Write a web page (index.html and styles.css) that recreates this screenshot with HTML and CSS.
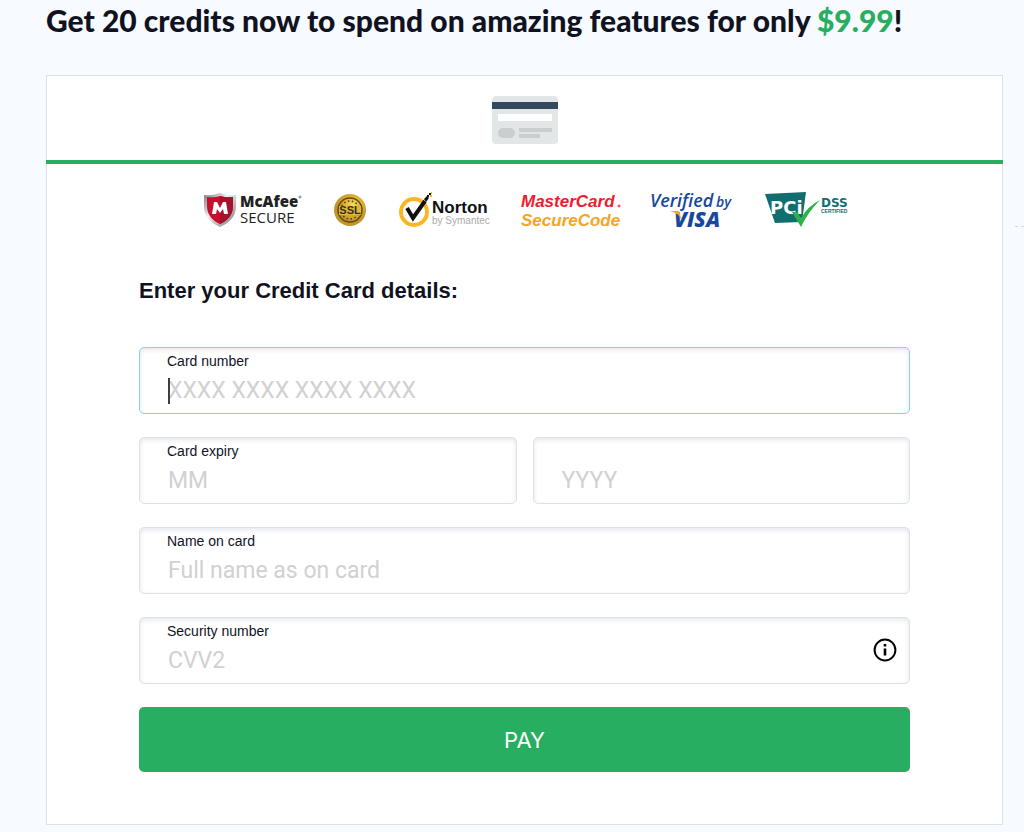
FILE: index.html
```html
<!DOCTYPE html>
<html lang="en">
<head>
<meta charset="utf-8">
<meta name="viewport" content="width=device-width, initial-scale=1">
<title>Get credits</title>
<link rel="stylesheet" href="styles.css">
</head>
<body>
<main class="page">
  <h1 class="offer">Get 20 credits now to spend on amazing features for only <span class="price">$9.99</span>!</h1>
  <div class="layout">
    <section class="panel">
      <div class="panel-tab">
        <svg class="card-icon" width="66" height="48" viewBox="0 0 66 48" role="img" aria-label="Credit card">
          <rect width="66" height="48" rx="4" fill="#e2e6e6"/>
          <rect y="6" width="66" height="7" fill="#324a5e"/>
          <rect x="6" y="18" width="54" height="7" fill="#fff"/>
          <rect x="6" y="32" width="17" height="10" rx="5" fill="#cbcecd"/>
          <rect x="27" y="32" width="33" height="4" fill="#cbcecd"/>
          <rect x="27" y="38" width="21" height="4" fill="#cbcecd"/>
        </svg>
      </div>
      <div class="badges">
        <svg width="98" height="36" viewBox="0 0 98 36" role="img" aria-label="McAfee Secure">
          <defs><linearGradient id="steel" x1="0" y1="0" x2="1" y2="1"><stop offset="0" stop-color="#777"/><stop offset=".4" stop-color="#eee"/><stop offset="1" stop-color="#777"/></linearGradient></defs>
          <path d="M1 3Q9 4 17 1Q25 4 33 3V14Q33 28 17 35Q1 28 1 14Z" fill="url(#steel)"/>
          <path d="M4 5Q11 6 17 4Q24 6 30 5V14Q30 26 17 32Q4 26 4 14Z" fill="#c8102e"/>
          <path d="M17 4Q24 6 30 5V14Q30 26 17 32Z" fill="#a5122c"/>
          <path d="M9 22L11 10H14L17 16L20 10H23L25 22H21L20 17L17 21L14 17L13 22Z" fill="#fff"/>
          <text class="mcafee" x="37" y="15">McAfee</text>
          <text class="mcafee-secure" x="37" y="31">SECURE</text>
          <circle cx="97" cy="5" r="1" fill="none" stroke="#777" stroke-width="1"/>
        </svg>
        <svg width="33" height="36" viewBox="0 0 33 36" role="img" aria-label="SSL">
          <defs><radialGradient id="gold" cx=".6" cy=".35"><stop offset="0" stop-color="#f8df62"/><stop offset=".6" stop-color="#dfab2c"/><stop offset="1" stop-color="#c39427"/></radialGradient></defs>
          <circle cx="17" cy="18" r="16" fill="url(#gold)"/>
          <circle cx="17" cy="18" r="12" fill="none" stroke="#5d4a1c" stroke-width="1.5"/>
          <circle cx="17" cy="18" r="9" fill="none" stroke="#4b3c1b" stroke-width="1.5" stroke-dasharray="1.5 2.5"/>
          <rect x="6" y="14" width="22" height="9" fill="#e2b53b"/>
          <text class="ssl" x="17" y="22">SSL</text>
        </svg>
        <svg width="91" height="38" viewBox="0 0 91 38" role="img" aria-label="Norton by Symantec">
          <circle cx="16" cy="21" r="13" fill="#fff" stroke="#fbb624" stroke-width="4"/>
          <path d="M9 17L15 27L27 10" fill="none" stroke="#111" stroke-width="4"/>
          <path d="M26 8l3-3 2 2-3 4zM29 4h2v2h-2zM31 2h2v2h-2z" fill="#111"/>
          <path d="M32 4h2v2h-2zM33 1h1v2h-1z" fill="#fbb624"/>
          <text class="norton" x="34" y="22">Norton</text>
          <text class="symantec" x="34" y="33">by Symantec</text>
        </svg>
        <svg width="98" height="38" viewBox="0 0 98 38" role="img" aria-label="MasterCard SecureCode">
          <text class="mastercard" x="0" y="16">MasterCard</text>
          <text class="securecode" x="0" y="35">SecureCode</text>
          <circle cx="98" cy="15" r="1" fill="none" stroke="#ee1c2e" stroke-width="1"/>
        </svg>
        <svg width="82" height="38" viewBox="0 0 82 38" role="img" aria-label="Verified by Visa">
          <text class="verified" x="-1" y="16">Verified</text>
          <text class="verified-by" x="65" y="16">by</text>
          <text class="visa" x="23" y="36">VISA</text>
          <path d="M19 20H28L31 30Q28 22 19 20Z" fill="#f7a823"/>
        </svg>
        <svg width="85" height="36" viewBox="0 0 85 36" role="img" aria-label="PCI DSS Certified">
          <path d="M0 2L41 0L37 30L10 31Z" fill="#116e70"/>
          <text class="pci" x="5" y="22">PCi</text>
          <path d="M27 20H32L36 26Q43 14 55 8Q43 20 36 35Z" fill="#2bb24c"/>
          <text class="dss" x="56" y="15">DSS</text>
          <text class="certified" x="56" y="21">CERTIFIED</text>
        </svg>
      </div>
      <form class="payment">
        <h2 class="form-title">Enter your Credit Card details:</h2>
        <div class="field field-active">
          <label for="number">Card number</label>
          <input id="number" type="text" inputmode="numeric" placeholder="XXXX XXXX XXXX XXXX">
          <span class="caret"></span>
        </div>
        <div class="field-row">
          <div class="field">
            <label for="month">Card expiry</label>
            <input id="month" type="text" inputmode="numeric" placeholder="MM">
          </div>
          <div class="field field-unlabelled">
            <input type="text" inputmode="numeric" placeholder="YYYY" aria-label="Card expiry year">
          </div>
        </div>
        <div class="field">
          <label for="name">Name on card</label>
          <input id="name" type="text" placeholder="Full name as on card">
        </div>
        <div class="field">
          <label for="cvv">Security number</label>
          <input id="cvv" type="text" inputmode="numeric" placeholder="CVV2">
          <button class="info" type="button" aria-label="About the security number">
            <svg width="24" height="24" viewBox="0 0 24 24" aria-hidden="true">
              <circle cx="12" cy="12" r="10.4" fill="none" stroke="#000" stroke-width="2"/>
              <path d="M12 10.5v7M12 6v2.5" stroke="#000" stroke-width="2.6"/>
            </svg>
          </button>
        </div>
        <button class="pay" type="submit">PAY</button>
      </form>
    </section>
    <div class="divider"></div>
  </div>
</main>
</body>
</html>
```
FILE: styles.css
```css
* { box-sizing: border-box; }

body {
  margin: 0;
  background: #f7faff;
  color: #10131f;
  font-family: "Liberation Sans", Arial, sans-serif;
}

.page { padding: 0 0 7px 46px; }

.offer {
  margin: 0;
  padding-bottom: 35px;
  font: 900 30px/40px "Lato", sans-serif;
}

.price { color: #27ae60; }

.layout {
  display: grid;
  grid-template-columns: 1fr 9px;
  column-gap: 12px;
}

.panel {
  background: #fff;
  border: 1px solid #dde1ea;
}

.panel-tab {
  display: flex;
  justify-content: center;
  margin: 0 -1px;
  padding: 20px 0 16px;
  border-bottom: 4px solid #27ae60;
}

.card-icon { display: block; }

.badges {
  display: flex;
  justify-content: center;
  align-items: center;
  gap: 32px;
  padding: 27px 0 0 4px;
}

.badges svg { overflow: visible; }

.mcafee { font: 800 15px "Open Sans", sans-serif; fill: #222; }
.mcafee-secure { font: 400 15px "Open Sans", sans-serif; fill: #222; }
.ssl { font: 700 11px "Liberation Sans", sans-serif; fill: #33301f; text-anchor: middle; }
.norton { font: 700 17px "Liberation Sans", sans-serif; fill: #111; }
.symantec { font: 400 10px "Liberation Sans", sans-serif; fill: #aaa; }
.mastercard { font: italic 700 17px "Liberation Sans", sans-serif; fill: #ee1c2e; }
.securecode { font: italic 700 17px "Liberation Sans", sans-serif; fill: #f5a623; }
.verified { font: italic 600 18px "Open Sans", sans-serif; fill: #17479e; }
.verified-by { font: italic 600 14px "Open Sans", sans-serif; fill: #17479e; }
.visa { font: italic 800 21px "Open Sans", sans-serif; fill: #17479e; }
.pci { font: 700 18px "DejaVu Sans", sans-serif; fill: #fff; }
.dss { font: 700 12px "DejaVu Sans", sans-serif; fill: #116e70; }
.certified { font: 700 5px "Liberation Sans", sans-serif; fill: #116e70; }

.payment {
  display: flex;
  flex-direction: column;
  gap: 23px;
  padding: 48px 92px 52px;
}

.form-title {
  margin: 0 0 19px;
  font-size: 22px;
  line-height: 28px;
}

.field-row {
  display: grid;
  grid-template-columns: 1fr 1fr;
  gap: 16px;
}

.field {
  position: relative;
  display: flex;
  flex-direction: column;
  padding: 4px 27px 5px;
  border: 1px solid #dde2ea;
  border-radius: 5px;
  box-shadow: inset 0 2px 5px #e4e7ed;
}

.field-active { border-color: #8ecaf2; }
.field-unlabelled { justify-content: flex-end; }

.field label {
  font-size: 14px;
  line-height: 18px;
}

.field input {
  width: 100%;
  height: 38px;
  padding: 4px 1px 1px;
  border: 0;
  outline: 0;
  background: transparent;
  color: #10131f;
  font: 400 23px "Roboto", sans-serif;
}

.field input::placeholder { color: #d0d1d2; opacity: 1; }

.caret {
  position: absolute;
  left: 28px;
  bottom: 9px;
  width: 2px;
  height: 26px;
  background: #3c3f48;
}

.info {
  position: absolute;
  right: 12px;
  top: 20px;
  padding: 0;
  border: 0;
  background: none;
}

.info svg { display: block; }

.pay {
  padding: 0;
  height: 65px;
  border: 0;
  border-radius: 5px;
  background: #27ae60;
  color: #fff;
  font: 400 22px "Inter", sans-serif;
}

.divider {
  margin-top: 151px;
  border-top: 1px dashed #d5dae3;
}
```
